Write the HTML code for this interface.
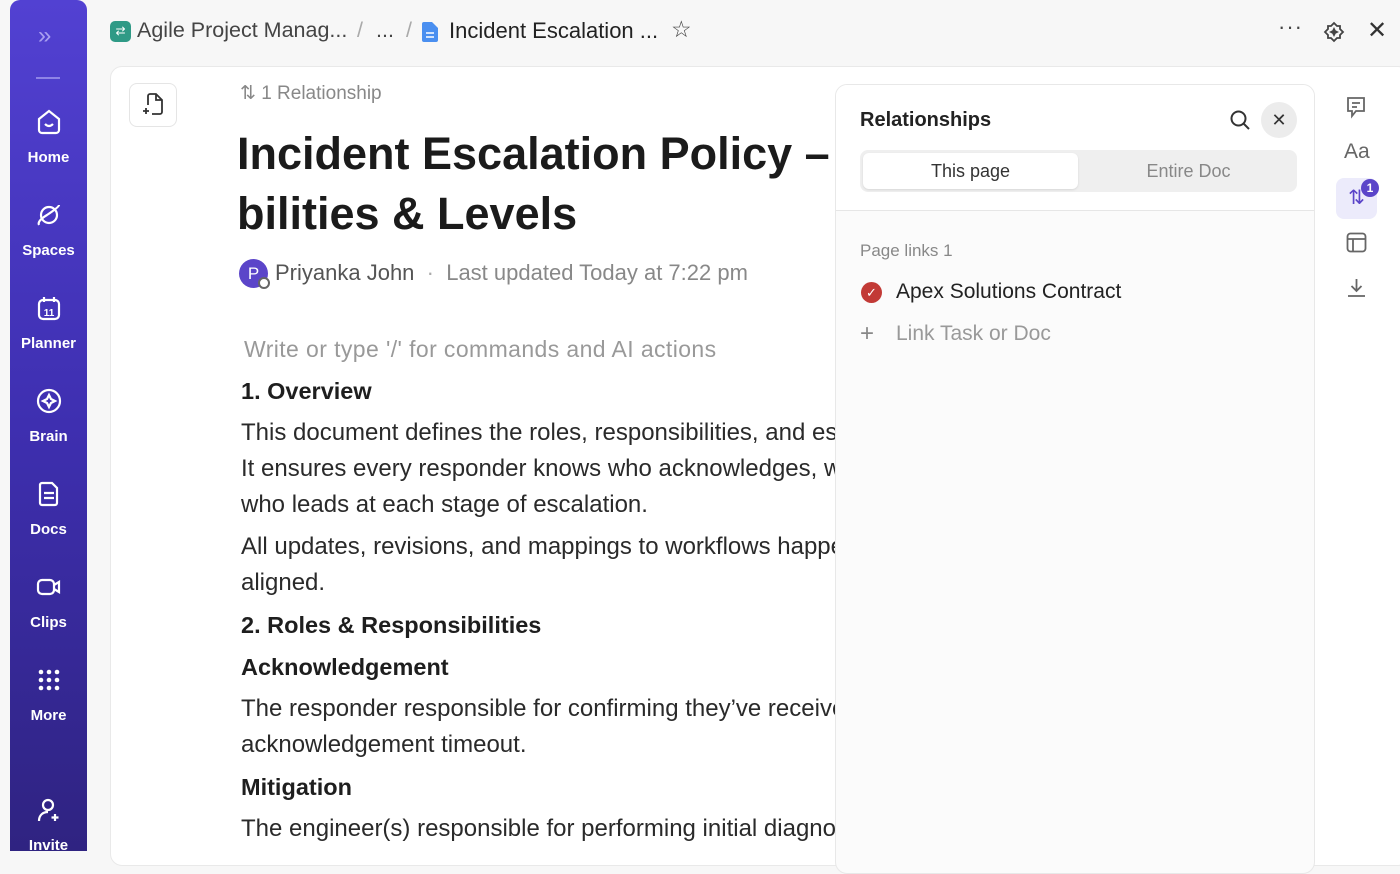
<!DOCTYPE html>
<html><head><meta charset="utf-8"><style>
*{margin:0;padding:0;box-sizing:border-box}
body{width:1400px;height:851px;overflow:hidden;background:#f7f7f7;font-family:"Liberation Sans",sans-serif;position:relative;color:#222}
.abs{position:absolute;white-space:nowrap}
.sb{position:absolute;left:10px;top:0;width:77px;height:851px;border-top-right-radius:10px;border-top-left-radius:10px;background:linear-gradient(#5241d2,#3e2fb0 50%,#2f2381)}
.ni{position:absolute;left:0;width:77px;text-align:center;color:#fff;font-size:15px;font-weight:bold}
.ni svg{display:block;margin:0 auto 13px}
.card{position:absolute;left:110px;top:66px;width:1300px;height:800px;background:#fff;border:1px solid #e9e9e9;border-radius:12px}
.t{position:absolute;left:241px;font-size:24px;color:#2a2a2a;white-space:nowrap;line-height:36px}
.h{font-weight:bold;color:#1e1e1e;font-size:23.5px}
.panel{position:absolute;left:835px;top:84px;width:480px;height:790px;background:#fbfbfb;border:1px solid #e8e8e8;border-radius:12px;overflow:hidden}
</style></head><body>
<div class="sb">
 <div class="abs" style="left:28px;top:22px;color:#a99ff0;font-size:24px">»</div>
 <div class="abs" style="left:26px;top:77px;width:24px;height:2px;background:#8e83e6"></div>
 <div class="ni" style="top:108px"><svg width="28" height="28" viewBox="0 0 28 28" fill="none" stroke="#fff" stroke-width="2.2"><path d="M4 11 L14 3 L24 11 V22 a3 3 0 0 1 -3 3 H7 a3 3 0 0 1 -3 -3Z"/><path d="M10 16 q4 4 8 0"/></svg>Home</div>
 <div class="ni" style="top:201px"><svg width="28" height="28" viewBox="0 0 28 28" fill="none" stroke="#fff" stroke-width="2.2"><circle cx="14" cy="14" r="8"/><path d="M4 24 Q2 20 12 14 Q24 6 24 4"/></svg>Spaces</div>
 <div class="ni" style="top:294px"><svg width="28" height="28" viewBox="0 0 28 28" fill="none" stroke="#fff" stroke-width="2.2"><rect x="4" y="6" width="20" height="19" rx="4"/><path d="M9 3v5M19 3v5"/><text x="14" y="22" fill="#fff" stroke="none" font-size="10" font-weight="bold" text-anchor="middle" font-family="Liberation Sans">11</text></svg>Planner</div>
 <div class="ni" style="top:387px"><svg width="28" height="28" viewBox="0 0 28 28" fill="none" stroke="#fff" stroke-width="2.2"><circle cx="14" cy="14" r="11"/><path d="M14 8 l2 4 4 2 -4 2 -2 4 -2 -4 -4 -2 4 -2z"/></svg>Brain</div>
 <div class="ni" style="top:480px"><svg width="28" height="28" viewBox="0 0 28 28" fill="none" stroke="#fff" stroke-width="2.2"><path d="M7 3h10l5 5v15a2 2 0 0 1-2 2H7a2 2 0 0 1-2-2V5a2 2 0 0 1 2-2z"/><path d="M9 13h10M9 18h10"/></svg>Docs</div>
 <div class="ni" style="top:573px"><svg width="28" height="28" viewBox="0 0 28 28" fill="none" stroke="#fff" stroke-width="2.2"><rect x="3" y="7" width="16" height="14" rx="4"/><path d="M19 12l5-3v10l-5-3"/></svg>Clips</div>
 <div class="ni" style="top:666px"><svg width="28" height="28" viewBox="0 0 28 28" fill="#fff"><circle cx="6" cy="6" r="2.3"/><circle cx="14" cy="6" r="2.3"/><circle cx="22" cy="6" r="2.3"/><circle cx="6" cy="14" r="2.3"/><circle cx="14" cy="14" r="2.3"/><circle cx="22" cy="14" r="2.3"/><circle cx="6" cy="22" r="2.3"/><circle cx="14" cy="22" r="2.3"/><circle cx="22" cy="22" r="2.3"/></svg>More</div>
 <div class="ni" style="top:796px"><svg width="28" height="28" viewBox="0 0 28 28" fill="none" stroke="#fff" stroke-width="2.2"><circle cx="13" cy="9" r="5"/><path d="M4 25c0-6 4-9 9-9M20 18v7M16.5 21.5h7"/></svg>Invite</div>
</div>

<div class="abs" style="left:110px;top:21px;width:21px;height:21px;border-radius:5px;background:#2f9a86;color:#fff;font-size:12px;text-align:center;line-height:21px">⇄</div>
<div class="abs" style="left:137px;top:18px;font-size:21.5px;color:#444">Agile Project Manag...</div>
<div class="abs" style="left:357px;top:18px;font-size:21.5px;color:#aaa">/</div>
<div class="abs" style="left:376px;top:18px;font-size:21.5px;color:#444">...</div>
<div class="abs" style="left:406px;top:18px;font-size:21.5px;color:#aaa">/</div>
<svg class="abs" style="left:421px;top:21px" width="18" height="22" viewBox="0 0 18 22"><path d="M3 1h8l6 6v12a2 2 0 0 1-2 2H3a2 2 0 0 1-2-2V3a2 2 0 0 1 2-2z" fill="#4a8ff0"/><path d="M5 12h8M5 16h8" stroke="#fff" stroke-width="1.6"/></svg>
<div class="abs" style="left:449px;top:18px;font-size:22px;color:#222">Incident Escalation ...</div>
<div class="abs" style="left:671px;top:16px;font-size:23px;color:#444">☆</div>
<div class="abs" style="left:1278px;top:14px;font-size:22px;color:#444;letter-spacing:1px">···</div>
<svg class="abs" style="left:1323px;top:21px" width="22" height="22" viewBox="0 0 22 22" fill="none" stroke="#444" stroke-width="1.8"><path d="M11 2l3 3h3v3l3 3-3 3v3h-3l-3 3-3-3H5v-3l-3-3 3-3V5h3z"/><path d="M11 8l1 2 2 1-2 1-1 2-1-2-2-1 2-1z" fill="#444"/></svg>
<div class="abs" style="left:1367px;top:16px;font-size:24px;color:#333">✕</div>

<div class="card"></div>
<div class="abs" style="left:129px;top:83px;width:48px;height:44px;border:1px solid #e5e5e5;border-radius:8px;background:#fff"></div>
<svg class="abs" style="left:141px;top:92px" width="24" height="26" viewBox="0 0 24 26" fill="none" stroke="#333" stroke-width="1.8"><path d="M7 13V4a2 2 0 0 1 2-2h6l6 6v12a2 2 0 0 1-2 2h-8M15 2v6h6M2 19h6M5 16v6"/></svg>
<div class="abs" style="left:240px;top:82px;font-size:19px;color:#888">⇅ 1 Relationship</div>
<div class="abs" style="left:237px;top:124px;font-size:45px;font-weight:bold;color:#1b1b1b;line-height:60px">Incident Escalation Policy –<br>bilities &amp; Levels</div>
<div class="abs" style="left:239px;top:259px;width:29px;height:29px;border-radius:50%;background:#5b45c9;color:#fff;font-size:17px;text-align:center;line-height:29px">P</div>
<div class="abs" style="left:258px;top:277px;width:12px;height:12px;border-radius:50%;background:#fff;border:2px solid #666"></div>
<div class="abs" style="left:275px;top:260px;font-size:22px;color:#555">Priyanka John &nbsp;<span style="color:#aaa">·</span>&nbsp; <span style="color:#888">Last updated Today at 7:22 pm</span></div>
<div class="t" style="top:331px;left:244px;color:#999;font-size:23px;letter-spacing:0.4px">Write or type '/' for commands and AI actions</div>
<div class="t h" style="top:373px">1. Overview</div>
<div class="t" style="top:415px">This document defines the roles, responsibilities, and escalation levels</div>
<div class="t" style="top:451px">It ensures every responder knows who acknowledges, who mitigates and</div>
<div class="t" style="top:487px">who leads at each stage of escalation.</div>
<div class="t" style="top:529px">All updates, revisions, and mappings to workflows happen here to stay</div>
<div class="t" style="top:565px">aligned.</div>
<div class="t h" style="top:607px">2. Roles &amp; Responsibilities</div>
<div class="t h" style="top:649px">Acknowledgement</div>
<div class="t" style="top:691px">The responder responsible for confirming they’ve received the alert within the</div>
<div class="t" style="top:727px">acknowledgement timeout.</div>
<div class="t h" style="top:769px">Mitigation</div>
<div class="t" style="top:811px">The engineer(s) responsible for performing initial diagnosis and mitigation</div>

<div class="panel">
 <div style="position:absolute;left:0;top:0;width:480px;height:126px;background:#fff;border-bottom:1px solid #e6e6e6"></div>
 <div class="abs" style="left:24px;top:24px;font-size:20px;font-weight:bold;color:#222">Relationships</div>
 <svg class="abs" style="left:393px;top:24px" width="22" height="22" viewBox="0 0 22 22" fill="none" stroke="#333" stroke-width="2"><circle cx="9.5" cy="9.5" r="7"/><path d="M15 15l5 5"/></svg>
 <div class="abs" style="left:425px;top:17px;width:36px;height:36px;border-radius:50%;background:#ececec;text-align:center;line-height:36px;font-size:18px;color:#333">✕</div>
 <div class="abs" style="left:24px;top:65px;width:437px;height:42px;border-radius:8px;background:#efefef"></div>
 <div class="abs" style="left:27px;top:68px;width:215px;height:36px;border-radius:6px;background:#fff;box-shadow:0 1px 2px rgba(0,0,0,.1);text-align:center;line-height:36px;font-size:18px;color:#333">This page</div>
 <div class="abs" style="left:245px;top:68px;width:215px;text-align:center;line-height:36px;font-size:18px;color:#888">Entire Doc</div>
 <div class="abs" style="left:24px;top:156px;font-size:17px;color:#888">Page links 1</div>
 <div class="abs" style="left:25px;top:197px;width:21px;height:21px;border-radius:50%;background:#c23a36;color:#fff;font-size:13px;text-align:center;line-height:21px">✓</div>
 <div class="abs" style="left:60px;top:195px;font-size:21px;color:#222">Apex Solutions Contract</div>
 <div class="abs" style="left:24px;top:235px;font-size:24px;color:#888">+</div>
 <div class="abs" style="left:60px;top:237px;font-size:21px;color:#999">Link Task or Doc</div>
</div>

<svg class="abs" style="left:1345px;top:96px" width="22" height="24" viewBox="0 0 22 24" fill="none" stroke="#666" stroke-width="1.8"><path d="M3 2h16v13H11l-4 5v-5H3z"/><path d="M7 7h8M7 11h5"/></svg>
<div class="abs" style="left:1344px;top:140px;font-size:21px;color:#666">Aa</div>
<div class="abs" style="left:1336px;top:178px;width:41px;height:41px;border-radius:8px;background:#ecebfb;color:#5b45c9;font-size:20px;text-align:center;line-height:41px">⇅</div>
<div class="abs" style="left:1361px;top:179px;width:18px;height:18px;border-radius:50%;background:#5b45c9;color:#fff;font-size:12px;font-weight:bold;text-align:center;line-height:18px">1</div>
<svg class="abs" style="left:1346px;top:232px" width="21" height="21" viewBox="0 0 21 21" fill="none" stroke="#666" stroke-width="1.8"><rect x="1.5" y="1.5" width="18" height="18" rx="3"/><path d="M1.5 7h18M7 7v12"/></svg>
<svg class="abs" style="left:1346px;top:277px" width="21" height="21" viewBox="0 0 21 21" fill="none" stroke="#666" stroke-width="1.8"><path d="M10.5 2v12M5.5 9l5 5 5-5M2 19h17"/></svg>
</body></html>
